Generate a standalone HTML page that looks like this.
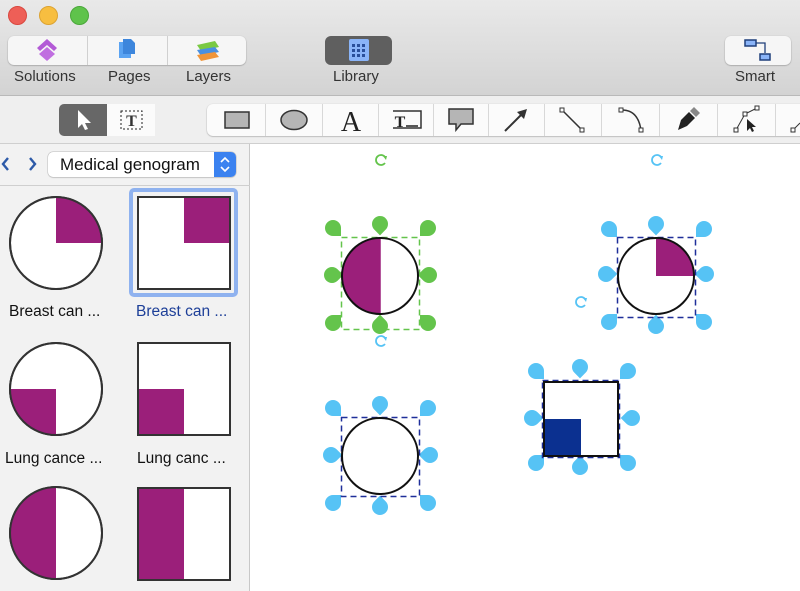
<!DOCTYPE html>
<html><head><meta charset="utf-8"><style>
*{margin:0;padding:0;box-sizing:border-box}
body{width:800px;height:591px;overflow:hidden;font-family:"Liberation Sans",sans-serif;background:#fff;position:relative}
.top{position:absolute;left:0;top:0;width:800px;height:96px;background:linear-gradient(#e9e9e9,#d3d3d3);border-bottom:1px solid #b9b9b9}
.tb2{position:absolute;left:0;top:96px;width:800px;height:48px;background:#efefef;border-bottom:1px solid #cfcfcf}
.lbl{position:absolute;font-size:15px;color:#333;top:68px}
.seg{position:absolute;top:36px;height:29px;background:#f6f6f6;border-radius:6px;box-shadow:0 0.5px 1.5px rgba(0,0,0,.35)}
.side{position:absolute;left:0;top:144px;width:250px;height:447px;background:#f2f2f2;border-right:1px solid #c8c8c8}
.cap{position:absolute;font-size:15.5px;color:#111}
</style></head><body>
<div class="top"></div>
<div style="position:absolute;left:8px;top:6px;width:19px;height:19px;border-radius:50%;background:#ee5f57;border:1px solid #d9483f"></div>
<div style="position:absolute;left:39px;top:6px;width:19px;height:19px;border-radius:50%;background:#f7be40;border:1px solid #dca332"></div>
<div style="position:absolute;left:70px;top:6px;width:19px;height:19px;border-radius:50%;background:#5fc34b;border:1px solid #4aa73a"></div>
<div class="seg" style="left:8px;width:238px"></div>
<div style="position:absolute;left:87px;top:36px;width:1px;height:29px;background:#d0d0d0"></div>
<div style="position:absolute;left:167px;top:36px;width:1px;height:29px;background:#d0d0d0"></div>
<div style="position:absolute;left:325px;top:36px;width:67px;height:29px;background:#5f5f5f;border-radius:6px"></div>
<div class="seg" style="left:725px;width:66px"></div>
<svg style="position:absolute;left:0;top:0" width="800" height="96">
<g fill="#b35ad6"><path d="M47,39 L57,48 L54,51 L47,45 L40,51 L37,48Z"/><path d="M47,47 L55,54 L47,61 L39,54Z" fill="#c06ee0"/></g>
<path d="M119,42 h8 l4,4 v12 h-12z" fill="#5aa3f2"/><path d="M123,39 h8 l4,4 v11 h-12z" fill="#3d86dc"/>
<path d="M197,45 l18,-4 l4,6 l-18,4z" fill="#7ac943"/><path d="M197,50 l18,-3 l4,5 l-18,4z" fill="#4a90e2"/><path d="M197,55 l18,-3 l4,5 l-18,4z" fill="#f0953a"/>
<rect x="349" y="39" width="20" height="22" rx="2" fill="#8ab4f8"/><g fill="#2a4f9a"><rect x="352" y="44" width="3" height="3"/><rect x="357" y="44" width="3" height="3"/><rect x="362" y="44" width="3" height="3"/><rect x="352" y="49" width="3" height="3"/><rect x="357" y="49" width="3" height="3"/><rect x="362" y="49" width="3" height="3"/><rect x="352" y="54" width="3" height="3"/><rect x="357" y="54" width="3" height="3"/><rect x="362" y="54" width="3" height="3"/></g>
<rect x="745" y="40" width="11" height="6" fill="#8ab4f8" stroke="#1f3f7a" stroke-width="1.5"/><rect x="760" y="54" width="10" height="6" fill="#8ab4f8" stroke="#1f3f7a" stroke-width="1.5"/><path d="M756,43 h9 v10" stroke="#1f3f7a" fill="none" stroke-width="1.3"/>
</svg>
<div class="lbl" style="left:14px">Solutions</div>
<div class="lbl" style="left:108px">Pages</div>
<div class="lbl" style="left:186px">Layers</div>
<div class="lbl" style="left:333px">Library</div>
<div class="lbl" style="left:735px">Smart</div>
<div class="tb2"></div>
<div style="position:absolute;left:59px;top:104px;width:48px;height:32px;background:#676767;border-radius:5px 0 0 5px"></div>
<div style="position:absolute;left:107px;top:104px;width:48px;height:32px;background:#fbfbfb"></div>
<div style="position:absolute;left:207px;top:104px;width:600px;height:32px;background:#fbfbfb;border-radius:6px;box-shadow:0 0.5px 1.5px rgba(0,0,0,.35)"></div>
<svg style="position:absolute;left:0;top:96px" width="800" height="48">
<path d="M78,14 v18 l4,-4 l3,6 l3,-1 l-3,-6 h6z" fill="#fff"/>
<rect x="121" y="15" width="21" height="18" fill="none" stroke="#222" stroke-dasharray="2,2"/><text x="131.5" y="30" font-family="Liberation Serif" font-size="16" font-weight="bold" text-anchor="middle" fill="#333">T</text>
<g stroke="#d8d8d8"><line x1="265.5" y1="8" x2="265.5" y2="40"/><line x1="322.5" y1="8" x2="322.5" y2="40"/><line x1="378.5" y1="8" x2="378.5" y2="40"/><line x1="433.5" y1="8" x2="433.5" y2="40"/><line x1="488.5" y1="8" x2="488.5" y2="40"/><line x1="544.5" y1="8" x2="544.5" y2="40"/><line x1="601.5" y1="8" x2="601.5" y2="40"/><line x1="659.5" y1="8" x2="659.5" y2="40"/><line x1="717.5" y1="8" x2="717.5" y2="40"/><line x1="775.5" y1="8" x2="775.5" y2="40"/></g>
<rect x="225" y="16" width="24" height="16" fill="#b5b5b5" stroke="#333" stroke-width="1.5"/>
<ellipse cx="294" cy="24" rx="13" ry="9.5" fill="#b5b5b5" stroke="#333" stroke-width="1.5"/>
<text x="351" y="35" font-family="Liberation Serif" font-size="28" text-anchor="middle" fill="#222">A</text>
<path d="M393,15 h28 v17 h-28" fill="none" stroke="#333" stroke-width="1.5"/><text x="400" y="31" font-family="Liberation Serif" font-size="16" font-weight="bold" text-anchor="middle" fill="#222">T</text><line x1="406" y1="30" x2="418" y2="30" stroke="#222" stroke-width="1.5"/>
<path d="M449,13 h24 v15 h-12 l-5,6 v-6 h-7z" fill="#b5b5b5" stroke="#333" stroke-width="1.5"/>
<path d="M505,35 L523,17" stroke="#333" stroke-width="2"/><path d="M527,13 l-10,3 l7,7z" fill="#333"/>
<path d="M562,14 L582,34" stroke="#333" stroke-width="1.5"/><rect x="560" y="12" width="4" height="4" fill="#fff" stroke="#333"/><rect x="580" y="32" width="4" height="4" fill="#fff" stroke="#333"/>
<path d="M622,14 Q638,14 641,34" stroke="#333" stroke-width="1.5" fill="none"/><rect x="619" y="12" width="4" height="4" fill="#fff" stroke="#333"/><rect x="639" y="32" width="4" height="4" fill="#fff" stroke="#333"/>
<path d="M678,34 l3,-10 l8,-8 l6,6 l-8,8z" fill="#222"/><path d="M690,15 l4,-4 l6,6 l-4,4z" fill="#888"/>
<path d="M736,34 L745,18 L757,12" stroke="#333" fill="none"/><rect x="734" y="32" width="4" height="4" fill="#fff" stroke="#333"/><rect x="743" y="16" width="4" height="4" fill="#fff" stroke="#333"/><rect x="755" y="10" width="4" height="4" fill="#fff" stroke="#333"/><path d="M747,23 v12 l3,-3 l2,4 l2,-1 l-2,-4 h4z" fill="#222"/>
<path d="M793,34 L800,27" stroke="#333"/><rect x="791" y="32" width="4" height="4" fill="#fff" stroke="#333"/>
</svg>
<div class="side"></div>
<div style="position:absolute;left:0;top:185px;width:250px;height:1px;background:#cfcfcf"></div>
<svg style="position:absolute;left:0;top:144px" width="46" height="40"><path d="M8,14 l-5,6 l5,6" stroke="#2d5aa8" stroke-width="2.4" fill="none"/><path d="M30,14 l5,6 l-5,6" stroke="#2d5aa8" stroke-width="2.4" fill="none"/></svg>
<div style="position:absolute;left:48px;top:152px;width:188px;height:25px;background:#fff;border-radius:5px;box-shadow:0 0 0 0.5px #bbb,0 1px 1px rgba(0,0,0,.15)"></div>
<div style="position:absolute;left:60px;top:155px;font-size:17px;color:#111">Medical genogram</div>
<div style="position:absolute;left:214px;top:152px;width:22px;height:25px;background:#3b82f0;border-radius:0 5px 5px 0"></div>
<svg style="position:absolute;left:214px;top:152px" width="22" height="25"><path d="M7,10 l4,-4 l4,4 M7,15 l4,4 l4,-4" stroke="#fff" stroke-width="1.6" fill="none"/></svg>
<div style="position:absolute;left:129px;top:188px;width:109px;height:109px;border:4px solid #8fb2ef;border-radius:5px"></div>
<svg style="position:absolute;left:0;top:0" width="800" height="591">
<defs><path id="d" d="M8,0 A8,8 0 1 0 0,8 L8,8 Z"/></defs>
<!-- sidebar -->
<g stroke="#333" stroke-width="2">
<circle cx="56" cy="243" r="46" fill="#fff"/>
<path d="M56,197 A46,46 0 0 1 102,243 L56,243Z" fill="#9b1f7a" stroke="none"/>
<circle cx="56" cy="243" r="46" fill="none"/>
<rect x="138" y="197" width="92" height="92" fill="#fff"/><rect x="184" y="197" width="46" height="46" fill="#9b1f7a" stroke="none"/><rect x="138" y="197" width="92" height="92" fill="none"/>
<circle cx="56" cy="389" r="46" fill="#fff"/><path d="M56,389 L10,389 A46,46 0 0 0 56,435Z" fill="#9b1f7a" stroke="none"/><circle cx="56" cy="389" r="46" fill="none"/>
<rect x="138" y="343" width="92" height="92" fill="#fff"/><rect x="138" y="389" width="46" height="46" fill="#9b1f7a" stroke="none"/><rect x="138" y="343" width="92" height="92" fill="none"/>
<circle cx="56" cy="533" r="46" fill="#fff"/><path d="M56,487 A46,46 0 0 0 56,579Z" fill="#9b1f7a" stroke="none"/><circle cx="56" cy="533" r="46" fill="none"/>
<rect x="138" y="488" width="92" height="92" fill="#fff"/><rect x="138" y="488" width="46" height="92" fill="#9b1f7a" stroke="none"/><rect x="138" y="488" width="92" height="92" fill="none"/>
</g>
<!-- shape 1 green -->
<g fill="#64c44c">
<use href="#d" transform="translate(333,228) rotate(0)"/><use href="#d" transform="translate(380,224) rotate(45)"/><use href="#d" transform="translate(428,228) rotate(90)"/>
<use href="#d" transform="translate(332,275) rotate(-45)"/><use href="#d" transform="translate(429,275) rotate(135)"/>
<use href="#d" transform="translate(333,323) rotate(-90)"/><use href="#d" transform="translate(380,326) rotate(-135)"/><use href="#d" transform="translate(428,323) rotate(180)"/>
</g>
<rect x="341.5" y="237.5" width="78" height="92" fill="none" stroke="#64c44c" stroke-width="1.5" stroke-dasharray="6,4"/>
<circle cx="380" cy="276" r="38" fill="#fff"/><path d="M380,238 A38,38 0 0 0 380,314Z" fill="#9b1f7a"/><line x1="380" y1="238" x2="380" y2="314" stroke="#9b1f7a" stroke-width="1.5"/><circle cx="380" cy="276" r="38" fill="none" stroke="#111" stroke-width="2"/>
<g fill="#56c3f5">
<use href="#d" transform="translate(609,229) rotate(0)"/><use href="#d" transform="translate(656,224) rotate(45)"/><use href="#d" transform="translate(704,229) rotate(90)"/>
<use href="#d" transform="translate(606,274) rotate(-45)"/><use href="#d" transform="translate(706,274) rotate(135)"/>
<use href="#d" transform="translate(609,322) rotate(-90)"/><use href="#d" transform="translate(656,326) rotate(-135)"/><use href="#d" transform="translate(704,322) rotate(180)"/>
<use href="#d" transform="translate(333,408) rotate(0)"/><use href="#d" transform="translate(380,404) rotate(45)"/><use href="#d" transform="translate(428,408) rotate(90)"/>
<use href="#d" transform="translate(331,455) rotate(-45)"/><use href="#d" transform="translate(430,455) rotate(135)"/>
<use href="#d" transform="translate(333,503) rotate(-90)"/><use href="#d" transform="translate(380,507) rotate(-135)"/><use href="#d" transform="translate(428,503) rotate(180)"/>
<use href="#d" transform="translate(536,371) rotate(0)"/><use href="#d" transform="translate(580,367) rotate(45)"/><use href="#d" transform="translate(628,371) rotate(90)"/>
<use href="#d" transform="translate(532,418) rotate(-45)"/><use href="#d" transform="translate(632,418) rotate(135)"/>
<use href="#d" transform="translate(536,463) rotate(-90)"/><use href="#d" transform="translate(580,467) rotate(-135)"/><use href="#d" transform="translate(628,463) rotate(180)"/>
</g>
<g fill="none" stroke="#1f2f9a" stroke-width="1.5" stroke-dasharray="6,4">
<rect x="617.5" y="237.5" width="78" height="80"/><rect x="341.5" y="417.5" width="78" height="79"/><rect x="542.5" y="380.5" width="77" height="77"/>
</g>
<circle cx="656" cy="276" r="38" fill="#fff"/><path d="M656,238 A38,38 0 0 1 694,276 L656,276Z" fill="#9b1f7a"/><circle cx="656" cy="276" r="38" fill="none" stroke="#111" stroke-width="2"/>
<circle cx="380" cy="456" r="38" fill="#fff" stroke="#111" stroke-width="2"/>
<rect x="544" y="382" width="74" height="74" fill="#fff"/><rect x="544" y="419" width="37" height="37" fill="#0b3090"/><rect x="544" y="382" width="74" height="74" fill="none" stroke="#111" stroke-width="2"/>
<g fill="none" stroke-width="1.8"><path d="M385,157 A5,5 0 1 0 385,163" stroke="#64c44c"/><path d="M661,157 A5,5 0 1 0 661,163" stroke="#56c3f5"/><path d="M385,338 A5,5 0 1 0 385,344" stroke="#56c3f5"/><path d="M585,299 A5,5 0 1 0 585,305" stroke="#56c3f5"/></g>
<g><path d="M383,156 l4,0 l-1,4z" fill="#64c44c"/><path d="M659,156 l4,0 l-1,4z" fill="#56c3f5"/><path d="M383,337 l4,0 l-1,4z" fill="#56c3f5"/><path d="M583,298 l4,0 l-1,4z" fill="#56c3f5"/></g>
</svg>
<div class="cap" style="left:9px;top:303px">Breast can ...</div>
<div class="cap" style="left:136px;top:303px;color:#1d3f98">Breast can ...</div>
<div class="cap" style="left:5px;top:450px">Lung cance ...</div>
<div class="cap" style="left:137px;top:450px">Lung canc ...</div>
</body></html>
